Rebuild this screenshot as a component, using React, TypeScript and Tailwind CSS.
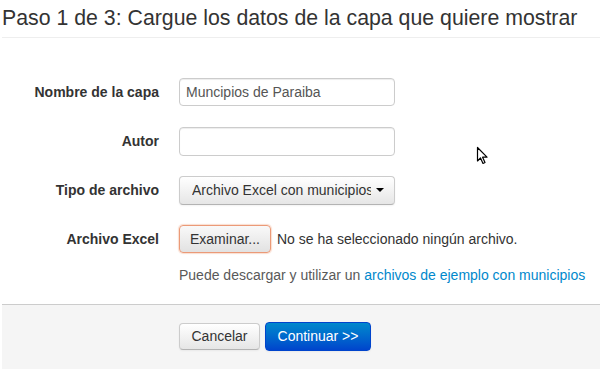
const labelCls = 'w-[157px] shrink-0 text-right text-[14px] font-bold text-[#333]'

function Row({ label, children }: { label: string; children: React.ReactNode }) {
  return (
    <div className="flex h-[28px] items-center gap-[20px]">
      <label className={labelCls}>{label}</label>
      {children}
    </div>
  )
}

function MouseCursor() {
  return (
    <svg
      className="pointer-events-none absolute left-[476px] top-[146px]"
      width="14"
      height="19"
      viewBox="0 0 14 19"
    >
      <path
        d="M1.5 1.5 L1.5 15 L4.5 12 L7 17.5 L9 16.5 L6.6 11.2 L11 11.2 Z"
        fill="#fff"
        stroke="#000"
        strokeWidth="1.2"
        strokeLinejoin="round"
      />
    </svg>
  )
}

export default function App() {
  return (
    <div className="relative flex h-[369px] w-[600px] flex-col overflow-hidden bg-white pl-[2px] font-['Liberation_Sans',Arial,sans-serif] text-[#333]">
      <div className="border-b border-[#eee] pb-[7px] pt-[6px]">
        <h1 className="whitespace-nowrap text-[21.3px] leading-[24px] font-normal text-[#333]">
          Paso 1 de 3: Cargue los datos de la capa que quiere mostrar
        </h1>
      </div>

      <form className="mt-[40px] flex flex-col gap-[21px]">
        <Row label="Nombre de la capa">
          <input
            type="text"
            defaultValue="Muncipios de Paraiba"
            className="h-[28px] w-[216px] rounded-[4px] border border-[#ccc] px-[6px] text-[14px] text-[#555] shadow-[inset_0_1px_1px_rgba(0,0,0,0.075)] outline-none"
          />
        </Row>
        <Row label="Autor">
          <input
            type="text"
            className="h-[29px] w-[216px] rounded-[4px] border border-[#ccc] px-[6px] text-[14px] text-[#555] shadow-[inset_0_1px_1px_rgba(0,0,0,0.075)] outline-none"
          />
        </Row>
        <Row label="Tipo de archivo">
          <button
            type="button"
            className="flex h-[29px] w-[216px] items-center rounded-[4px] border border-[#ccc] border-b-[#b3b3b3] bg-linear-to-b from-white to-[#e6e6e6] pl-[12px] text-[14px] text-[#333] shadow-[inset_0_1px_0_rgba(255,255,255,0.2),0_1px_2px_rgba(0,0,0,0.05)]"
          >
            <span className="w-[179px] overflow-hidden whitespace-nowrap text-left">
              Archivo Excel con municipios
            </span>
            <span className="ml-[5px] h-0 w-0 border-x-[4px] border-t-[4px] border-x-transparent border-t-black" />
          </button>
        </Row>
        <div className="flex flex-col">
          <Row label="Archivo Excel">
            <div className="flex items-center gap-[6px]">
              <button
                type="button"
                className="h-[28px] w-[92px] rounded-[4px] border border-[#eb9a78] bg-linear-to-b from-[#f9f9f9] to-[#e2e2e2] text-[14px] text-[#333] shadow-[0_0_1px_1px_rgba(240,160,120,0.35)]"
              >
                Examinar...
              </button>
              <span className="whitespace-nowrap text-[14px] text-[#333]">
                No se ha seleccionado ningún archivo.
              </span>
            </div>
          </Row>
          <p className="ml-[177px] mt-[12px] whitespace-nowrap text-[14px] leading-[20px] text-[#595959]">
            Puede descargar y utilizar un{' '}
            <a className="text-[#0088cc]">archivos de ejemplo con municipios</a>
          </p>
        </div>
      </form>

      <div className="mt-auto flex h-[65px] gap-[5px] border-t border-[#ccc] bg-[#f5f5f5] pl-[177px] pt-[18px]">
        <button
          type="button"
          className="h-[27px] w-[81px] rounded-[4px] border border-[#ccc] border-b-[#b3b3b3] bg-linear-to-b from-white to-[#e6e6e6] text-[14px] text-[#333] shadow-[0_1px_2px_rgba(0,0,0,0.05)]"
        >
          Cancelar
        </button>
        <button
          type="button"
          className="-mt-[1px] h-[29px] w-[106px] rounded-[4px] border border-[#0044cc] bg-linear-to-b from-[#0088cc] to-[#0044cc] text-[14px] text-white shadow-[0_1px_2px_rgba(0,0,0,0.05)]"
        >
          Continuar &gt;&gt;
        </button>
      </div>

      <MouseCursor />
    </div>
  )
}
